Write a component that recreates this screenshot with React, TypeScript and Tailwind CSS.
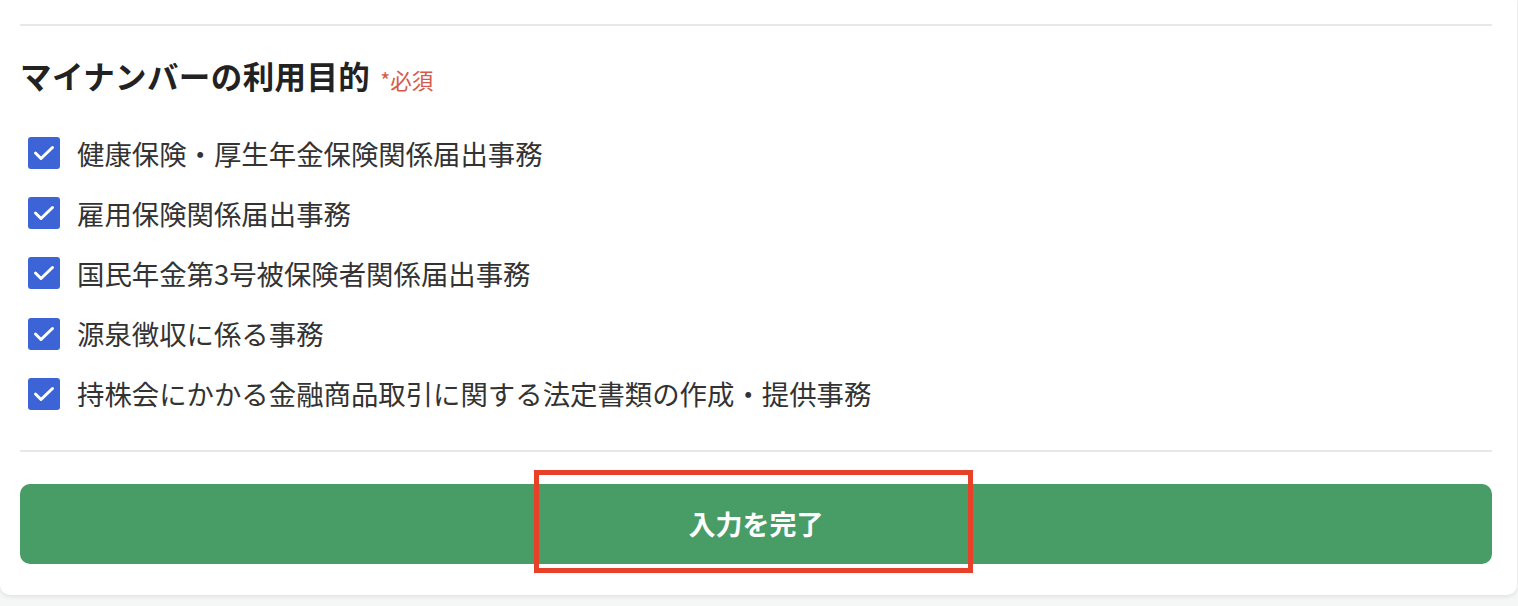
const PURPOSES = [
  "健康保険・厚生年金保険関係届出事務",
  "雇用保険関係届出事務",
  "国民年金第3号被保険者関係届出事務",
  "源泉徴収に係る事務",
  "持株会にかかる金融商品取引に関する法定書類の作成・提供事務",
];

const CheckIcon = () => (
  <svg viewBox="0 0 32 32" className="h-8 w-8">
    <rect x="0" y="0" width="32" height="32" rx="3" fill="#3c64d6" />
    <path
      d="M7.5 16l5.5 5.5 11.5-11"
      fill="none"
      stroke="#ffffff"
      strokeWidth="3"
      strokeLinecap="round"
      strokeLinejoin="round"
    />
  </svg>
);

export default function App() {
  return (
    <div
      className="min-h-[606px] w-full bg-[#f5f7f7]"
      style={{ fontFamily: '"Noto Sans CJK JP", "Noto Sans", sans-serif' }}
    >
      <div className="w-[1517px] rounded-b-[10px] bg-white pl-5 pr-[25px] pt-6 pb-[31px] shadow-[0_2px_4px_rgba(0,0,0,0.08)]">
        <div className="h-[2px] bg-[#e8e8e8]" />

        {/* Heading */}
        <div className="mt-[26px] flex items-baseline leading-[47px]">
          <h2 className="text-[31.5px] font-bold tracking-[0.4px] text-[#222]">マイナンバーの利用目的</h2>
          <span className="ml-[10px] text-[21.5px] text-[#d65a4a]">*必須</span>
        </div>

        {/* Checkbox list */}
        <ul className="mt-5">
          {PURPOSES.map((label) => (
            <li key={label} className="flex h-[60.2px] items-center pl-2">
              <CheckIcon />
              <span className="ml-[17px] text-[27.4px] text-[#333]">{label}</span>
            </li>
          ))}
        </ul>

        <div className="mt-[26px] h-[2px] bg-[#e8e8e8]" />

        {/* Submit */}
        <div className="relative mt-8">
          <button className="flex h-20 w-full items-center justify-center rounded-[10px] bg-[#489c66] text-[27px] font-bold text-white">
            入力を完了
          </button>
          <div className="pointer-events-none absolute left-[514px] top-[-14px] h-[103px] w-[439px] border-[5px] border-[#e8412a]" />
        </div>
      </div>
    </div>
  );
}
